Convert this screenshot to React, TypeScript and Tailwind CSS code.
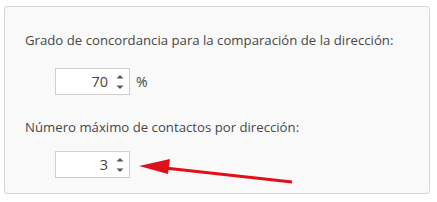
import React from "react";

function Spinner() {
  return (
    <svg width="8" height="16" viewBox="0 0 8 16" className="shrink-0">
      <path d="M0.5 4.5 L4 1 L7.5 4.5 Z" fill="#555" />
      <path d="M0.5 11.5 L4 15 L7.5 11.5 Z" fill="#555" />
    </svg>
  );
}

function NumberBox({ value }: { value: string }) {
  return (
    <div className="flex items-center w-[75px] h-[27px] bg-white border border-[#cfcfcf] pr-[5px]">
      <span className="flex-1 text-right pr-[8px] text-[14.5px] text-[#444]">{value}</span>
      <Spinner />
    </div>
  );
}

export default function App() {
  return (
    <div
      className="relative w-[437px] h-[202px] bg-white pt-[6px] pl-[4px]"
      style={{ fontFamily: '"Segoe UI", "Open Sans", "Noto Sans", sans-serif' }}
    >
      <div className="w-[426px] h-[188px] bg-[#f9f9f9] border border-[#d6d6d6] rounded-[3px] pl-[20px] pt-[23px]">
        <div className="text-[13.2px] leading-[20px] text-[#474747]">
          Grado de concordancia para la comparación de la dirección:
        </div>
        <div className="flex items-center gap-[6px] ml-[30px] mt-[18px]">
          <NumberBox value="70" />
          <span className="text-[14px] text-[#474747]">%</span>
        </div>
        <div className="text-[13.2px] leading-[20px] text-[#474747] mt-[22px]">
          Número máximo de contactos por dirección:
        </div>
        <div className="flex items-center ml-[30px] mt-[14px]">
          <NumberBox value="3" />
        </div>
      </div>
      <svg className="absolute left-0 top-0 pointer-events-none" width="437" height="202">
        <line x1="292" y1="182" x2="165" y2="168" stroke="#e0101a" strokeWidth="3" />
        <polygon points="139,166 170,159 168,174" fill="#e0101a" />
      </svg>
    </div>
  );
}
